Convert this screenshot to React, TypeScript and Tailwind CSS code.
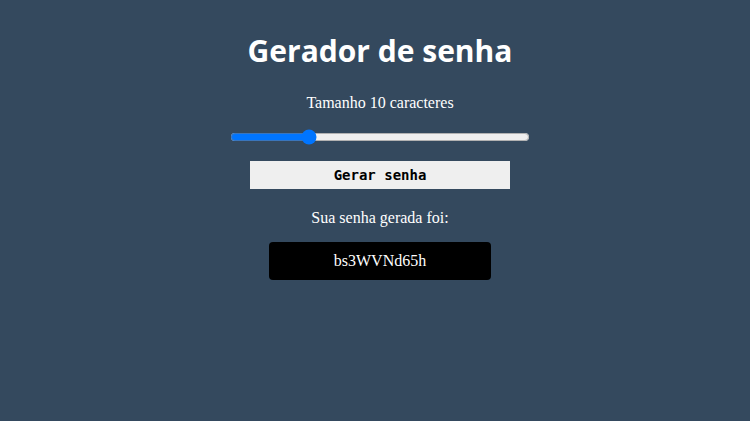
import React, { useState } from 'react';

const App: React.FC = () => {
  const [size, setSize] = useState(10);
  const password = 'bs3WVNd65h';

  return (
    <div className="min-h-screen w-full bg-[#34495e] flex flex-col items-center pt-[31px] pl-[10px] text-white font-['Liberation_Serif',serif]">
      {/* Title */}
      <h1 className="font-['Open_Sans',sans-serif] font-bold text-[30px] leading-[40px]">
        Gerador de senha
      </h1>

      <p className="mt-[20px] text-[16px] leading-[24px]">
        Tamanho {size} caracteres
      </p>

      <input
        type="range"
        min={5}
        max={25}
        value={size}
        onChange={(e) => setSize(Number(e.target.value))}
        className="mt-[14px] w-[300px] h-4 accent-[#0075ff]"
      />

      <button className="mt-[16px] w-[260px] h-[28px] bg-[#efefef] text-black font-['DejaVu_Sans_Mono',monospace] font-bold text-[14px]">
        Gerar senha
      </button>

      <p className="mt-[17px] text-[16px] leading-[24px]">Sua senha gerada foi:</p>

      {/* Password output */}
      <div className="mt-[12px] w-[222px] h-[38px] bg-black rounded-[4px] flex items-center justify-center text-[16px]">
        {password}
      </div>
    </div>
  );
};

export default App;
